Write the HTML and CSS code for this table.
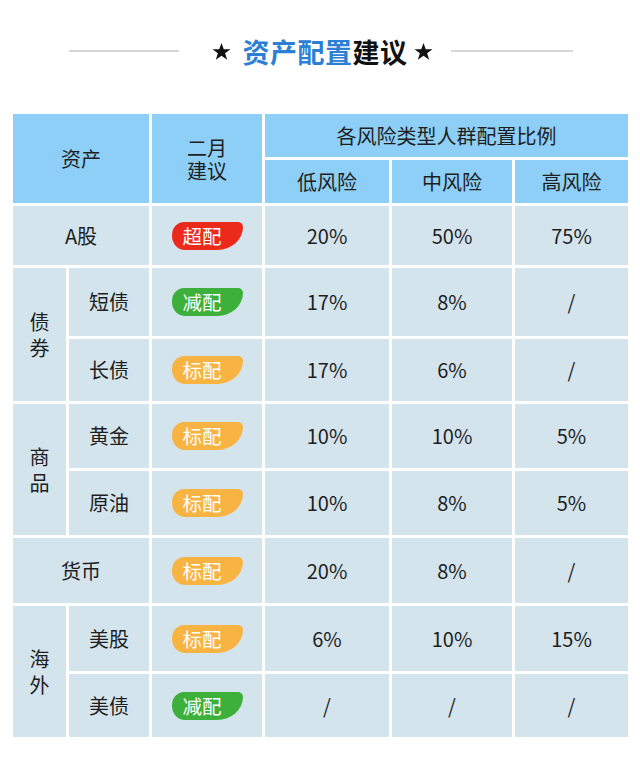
FILE: index.html
```html
<!DOCTYPE html>
<html lang="zh-CN">
<head>
<meta charset="utf-8">
<title>资产配置建议</title>
<link rel="stylesheet" href="styles.css">
</head>
<body>
<div class="page">
  <div class="title">
    <span class="line line-left"></span>
    <svg class="star star-left" viewBox="0 0 20 20" width="19" height="19"><polygon points="10,1 12.4,7.6 19.5,7.6 13.8,11.8 16,18.8 10,14.5 4,18.8 6.2,11.8 0.5,7.6 7.6,7.6" fill="#111"/></svg>
    <h1 class="title-text"><span class="blue">资产配置</span>建议</h1>
    <svg class="star star-right" viewBox="0 0 20 20" width="19" height="19"><polygon points="10,1 12.4,7.6 19.5,7.6 13.8,11.8 16,18.8 10,14.5 4,18.8 6.2,11.8 0.5,7.6 7.6,7.6" fill="#111"/></svg>
    <span class="line line-right"></span>
  </div>

  <div class="table">
    <div class="cell head c2 r2">资产</div>
    <div class="cell head r2 two-line">二月<br>建议</div>
    <div class="cell head c3">各风险类型人群配置比例</div>
    <div class="cell head">低风险</div>
    <div class="cell head">中风险</div>
    <div class="cell head">高风险</div>

    <div class="cell c2">A股</div>
    <div class="cell"><span class="badge red">超配</span></div>
    <div class="cell">20%</div>
    <div class="cell">50%</div>
    <div class="cell">75%</div>

    <div class="cell r2 vert">债<br>券</div>
    <div class="cell">短债</div>
    <div class="cell"><span class="badge green">减配</span></div>
    <div class="cell">17%</div>
    <div class="cell">8%</div>
    <div class="cell">/</div>

    <div class="cell">长债</div>
    <div class="cell"><span class="badge orange">标配</span></div>
    <div class="cell">17%</div>
    <div class="cell">6%</div>
    <div class="cell">/</div>

    <div class="cell r2 vert">商<br>品</div>
    <div class="cell">黄金</div>
    <div class="cell"><span class="badge orange">标配</span></div>
    <div class="cell">10%</div>
    <div class="cell">10%</div>
    <div class="cell">5%</div>

    <div class="cell">原油</div>
    <div class="cell"><span class="badge orange">标配</span></div>
    <div class="cell">10%</div>
    <div class="cell">8%</div>
    <div class="cell">5%</div>

    <div class="cell c2">货币</div>
    <div class="cell"><span class="badge orange">标配</span></div>
    <div class="cell">20%</div>
    <div class="cell">8%</div>
    <div class="cell">/</div>

    <div class="cell r2 vert">海<br>外</div>
    <div class="cell">美股</div>
    <div class="cell"><span class="badge orange">标配</span></div>
    <div class="cell">6%</div>
    <div class="cell">10%</div>
    <div class="cell">15%</div>

    <div class="cell">美债</div>
    <div class="cell"><span class="badge green">减配</span></div>
    <div class="cell">/</div>
    <div class="cell">/</div>
    <div class="cell">/</div>
  </div>
</div>
</body>
</html>
```

FILE: styles.css
```css
html, body {
  margin: 0;
  padding: 0;
  background: #ffffff;
}

body {
  font-family: "Noto Sans CJK SC", "Noto Sans", sans-serif;
  color: #222;
}

.page {
  width: 640px;
  padding: 0 12px 0 13px;
  box-sizing: border-box;
}

.title {
  height: 102px;
  display: flex;
  align-items: center;
  justify-content: center;
}

.line {
  display: block;
  height: 2px;
  background: #d6d6d6;
}

.line-left {
  width: 110px;
  margin-right: 33px;
}

.line-right {
  width: 122px;
  margin-left: 18px;
}

.star {
  display: block;
  flex: none;
}

.star-left {
  margin-right: 12px;
}

.star-right {
  margin-left: 6px;
}

.title-text {
  margin: 0;
  font-size: 27px;
  letter-spacing: 0.5px;
  font-weight: 700;
  line-height: 1;
  color: #111;
}

.title-text .blue {
  color: #2b80d5;
}

.table {
  margin-top: 12px;
  display: grid;
  grid-template-columns: 53px 80px 110px 124px 120px 113px;
  grid-template-rows: 43px 43px 59px 68px 62px 64px 64px 65px 65px 63px;
  gap: 3px;
  background: #fff;
}

.cell {
  background: #d4e4ed;
  display: flex;
  align-items: center;
  justify-content: center;
  font-size: 20px;
  line-height: 1;
  color: #1e1e1e;
  text-align: center;
}

.cell.head {
  background: #8dcff6;
}

.c2 {
  grid-column: span 2;
}

.c3 {
  grid-column: span 3;
}

.r2 {
  grid-row: span 2;
}

.two-line {
  line-height: 23px;
}

.vert {
  line-height: 26px;
}

.badge {
  display: inline-flex;
  align-items: center;
  box-sizing: border-box;
  width: 71px;
  height: 28px;
  padding-left: 11px;
  color: #fff;
  font-size: 19.5px;
  line-height: 1;
  border-radius: 12px 5px 26px 13px / 13px 5px 23px 14px;
}

.badge.red {
  background: #ec2a1c;
}

.badge.green {
  background: #3cb03a;
}

.badge.orange {
  background: #f8b443;
}
```
